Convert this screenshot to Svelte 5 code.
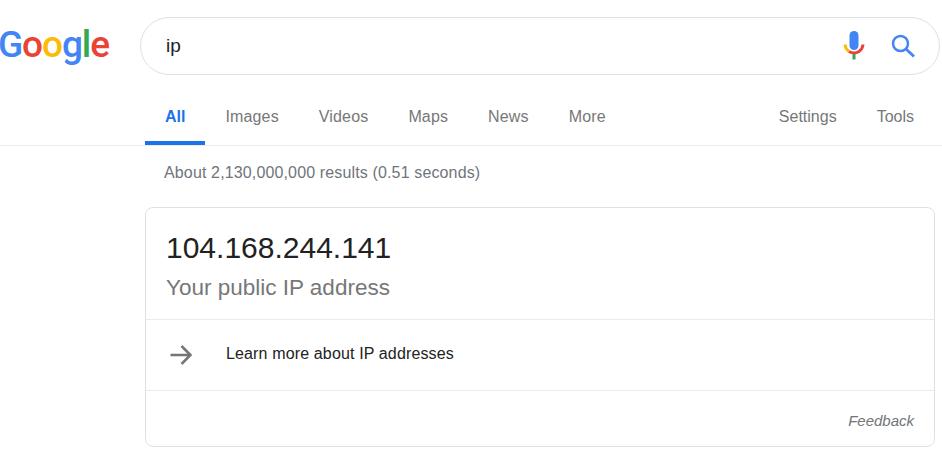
<script>
  const tabs = ['All', 'Images', 'Videos', 'Maps', 'News', 'More'];
  const tools = ['Settings', 'Tools'];
  const letters = [
    ['G', '#4285f4'],
    ['o', '#ea4335'],
    ['o', '#fbbc05'],
    ['g', '#4285f4'],
    ['l', '#34a853'],
    ['e', '#ea4335']
  ];
</script>

<div class="page">
  <header class="top">
    <div class="logo">
      {#each letters as [ch, color]}<span style="color: {color}">{ch}</span>{/each}
    </div>
    <div class="search">
      <span class="query">ip</span>
      <svg class="mic" width="24" height="34" viewBox="0 0 24 34">
        <rect x="7.5" y="2" width="9" height="19" rx="4.5" fill="#4285f4" />
        <path d="M3 15.500a9.500 9.500 0 0 0 4 7" fill="none" stroke="#fbbc05" stroke-width="3" />
        <path d="M7 22.500a9.500 9.500 0 0 0 10 0a9.500 9.500 0 0 0 4-7" fill="none" stroke="#ea4335" stroke-width="3" />
        <rect x="10.500" y="25" width="3" height="5.500" fill="#34a853" />
      </svg>
      <svg class="glass" width="26" height="26" viewBox="0 0 26 26">
        <circle cx="10.500" cy="10.500" r="7.500" fill="none" stroke="#4285f4" stroke-width="2.500" />
        <path d="M16 16l8 7.500" fill="none" stroke="#4285f4" stroke-width="2.800" />
      </svg>
    </div>
  </header>

  <nav class="tabs">
    {#each tabs as tab, i}
      <span class="tab" class:active={i === 0}>{tab}</span>
    {/each}
    <span class="spacer"></span>
    {#each tools as tool}
      <span class="tab tool">{tool}</span>
    {/each}
  </nav>

  <p class="stats">About 2,130,000,000 results (0.51 seconds)</p>

  <section class="card">
    <div class="answer">
      <div class="ip">104.168.244.141</div>
      <div class="caption">Your public IP address</div>
    </div>
    <div class="learn">
      <svg width="24" height="24" viewBox="0 0 24 24">
        <path d="M1.500 12h20M12.500 3l9 9-9 9" fill="none" stroke="#757575" stroke-width="2.500" />
      </svg>
      <span class="learn-text">Learn more about IP addresses</span>
    </div>
    <div class="foot"><i>Feedback</i></div>
  </section>
</div>

<style>
  :global(body) {
    margin: 0;
    background: #fff;
  }

  .page {
    width: 942px;
    height: 453px;
    overflow: hidden;
    font-family: "Liberation Sans", Arial, sans-serif;
  }

  .top {
    display: flex;
    align-items: flex-start;
    padding-top: 17px;
    height: 58px;
  }

  .logo {
    width: 142px;
    margin-left: -2px;
    flex: none;
    font-family: Roboto, sans-serif;
    font-weight: 500;
    font-size: 37px;
    line-height: 56px;
    letter-spacing: -1.1px;
    white-space: nowrap;
  }

  .search {
    box-sizing: border-box;
    flex: none;
    width: 800px;
    height: 58px;
    display: flex;
    align-items: center;
    padding: 0 23px 0 25px;
    border: 1px solid #dfe1e5;
    border-radius: 29px;
  }

  .query {
    flex: 1;
    font-size: 19px;
    color: #222;
  }

  .mic {
    margin-right: 24px;
  }

  .tabs {
    display: flex;
    height: 70px;
    padding-left: 145px;
    padding-right: 8px;
    border-bottom: 1px solid #ebebeb;
    box-sizing: border-box;
    margin-top: 1px;
  }

  .tab {
    box-sizing: border-box;
    padding: 31px 20px 0;
    font-size: 16px;
    line-height: 19px;
    letter-spacing: 0.15px;
    color: #777;
    height: 69px;
  }

  .tab.active {
    color: #1a73e8;
    font-weight: bold;
    letter-spacing: 0;
    border-bottom: 4px solid #1a73e8;
  }

  .tab.tool {
    letter-spacing: 0;
  }

  .spacer {
    flex: 1;
  }

  .stats {
    margin: 17px 0 0 164px;
    font-size: 16px;
    line-height: 19px;
    letter-spacing: 0.14px;
    color: #70757a;
  }

  .card {
    box-sizing: border-box;
    width: 790px;
    height: 240px;
    margin: 25px 0 0 145px;
    border: 1px solid #dfe1e5;
    border-radius: 8px;
  }

  .answer {
    height: 112px;
    box-sizing: border-box;
    padding: 22px 20px 0;
    border-bottom: 1px solid #ebebeb;
  }

  .ip {
    font-size: 30px;
    line-height: 36px;
    color: #222;
  }

  .caption {
    margin-top: 7px;
    font-size: 22.5px;
    line-height: 30px;
    color: #777;
  }

  .learn {
    height: 71px;
    box-sizing: border-box;
    display: flex;
    align-items: center;
    gap: 33px;
    padding-left: 23px;
    font-size: 16px;
    letter-spacing: 0.14px;
    color: #222;
    border-bottom: 1px solid #ebebeb;
  }

  .learn-text {
    margin-bottom: 2px;
  }

  .foot {
    padding: 21px 20px 0;
    text-align: right;
    font-size: 15px;
    line-height: 18px;
    color: #70757a;
  }
</style>
